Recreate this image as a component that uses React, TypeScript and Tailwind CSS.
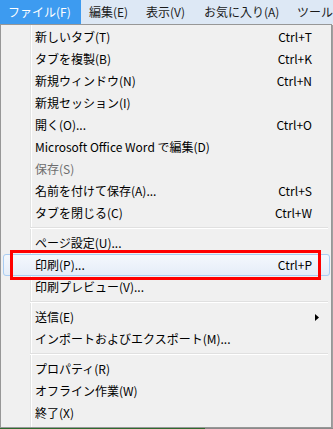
type MenuItem =
  | { kind: "item"; label: string; shortcut?: string; disabled?: boolean; active?: boolean; submenu?: boolean }
  | { kind: "sep" };

const items: MenuItem[] = [
  { kind: "item", label: "新しいタブ(T)", shortcut: "Ctrl+T" },
  { kind: "item", label: "タブを複製(B)", shortcut: "Ctrl+K" },
  { kind: "item", label: "新規ウィンドウ(N)", shortcut: "Ctrl+N" },
  { kind: "item", label: "新規セッション(I)" },
  { kind: "item", label: "開く(O)...", shortcut: "Ctrl+O" },
  { kind: "item", label: "Microsoft Office Word で編集(D)" },
  { kind: "item", label: "保存(S)", disabled: true },
  { kind: "item", label: "名前を付けて保存(A)...", shortcut: "Ctrl+S" },
  { kind: "item", label: "タブを閉じる(C)", shortcut: "Ctrl+W" },
  { kind: "sep" },
  { kind: "item", label: "ページ設定(U)..." },
  { kind: "item", label: "印刷(P)...", shortcut: "Ctrl+P", active: true },
  { kind: "item", label: "印刷プレビュー(V)..." },
  { kind: "sep" },
  { kind: "item", label: "送信(E)", submenu: true },
  { kind: "item", label: "インポートおよびエクスポート(M)..." },
  { kind: "sep" },
  { kind: "item", label: "プロパティ(R)" },
  { kind: "item", label: "オフライン作業(W)" },
  { kind: "item", label: "終了(X)" },
];

export default function App() {
  return (
    <div
      className="relative h-[429px] w-[333px] overflow-hidden bg-[#f0f0f0] text-[12px] leading-none text-black"
      style={{ fontFamily: '"Noto Sans CJK JP", "Noto Sans", sans-serif' }}
    >
      {/* menu bar */}
      <div className="flex h-[24px] bg-[#dde8f5] whitespace-nowrap text-[#1a1a1a]">
        <div className="flex w-[81px] shrink-0 items-center bg-[#3d9bf0] pl-[8px] text-white">ファイル(F)</div>
        <div className="flex w-[57px] shrink-0 items-center pl-[8px]">編集(E)</div>
        <div className="flex w-[58px] shrink-0 items-center pl-[8px]">表示(V)</div>
        <div className="flex w-[93px] shrink-0 items-center pl-[8px]">お気に入り(A)</div>
        <div className="flex shrink-0 items-center pl-[8px]">ツール(T)</div>
      </div>

      {/* dropdown */}
      <div className="flex h-[404px] w-[332px] flex-col border border-[#979797] bg-[linear-gradient(to_right,#f0f0f0_29px,#e2e3e3_29px,#e2e3e3_30px,#ffffff_30px,#ffffff_31px,#f0f0f0_31px)] py-[1px] shadow-[1px_1px_0_#a0a0a0]">
        {items.map((it, i) =>
          it.kind === "sep" ? (
            <div key={i} className="flex h-[8px] items-center pl-[29px] pr-[3px]">
              <div className="h-[2px] w-full border-t border-b border-t-[#e0e0e0] border-b-white" />
            </div>
          ) : it.active ? (
            <div
              key={i}
              className="ml-[2px] mr-[1px] flex h-[22px] items-center justify-between rounded-[3px] border border-[#a9cdf3] bg-[linear-gradient(to_bottom,#f4f8fd,#e5edf8)] pl-[31px] pr-[17px]"
            >
              <span>{it.label}</span>
              <span>{it.shortcut}</span>
            </div>
          ) : (
            <div key={i} className="flex h-[22px] items-center justify-between pl-[34px] pr-[19px]">
              <span className={it.disabled ? "text-[#6d6d6d]" : ""}>{it.label}</span>
              {it.shortcut ? <span>{it.shortcut}</span> : null}
              {it.submenu ? (
                <svg width="4" height="7" viewBox="0 0 4 7" className="-mr-[7px]">
                  <path d="M0 0 L4 3.5 L0 7 Z" fill="#000" />
                </svg>
              ) : null}
            </div>
          )
        )}
      </div>

      <div className="flex h-[1px]">
        <div className="w-[205px] bg-[#2e6b2e]" />
        <div className="flex-1 bg-[#8a8a8a]" />
      </div>

      {/* annotation box */}
      <div className="absolute left-[10px] top-[250px] h-[30px] w-[311px] border-[3px] border-[#ff0000]" />
    </div>
  );
}
